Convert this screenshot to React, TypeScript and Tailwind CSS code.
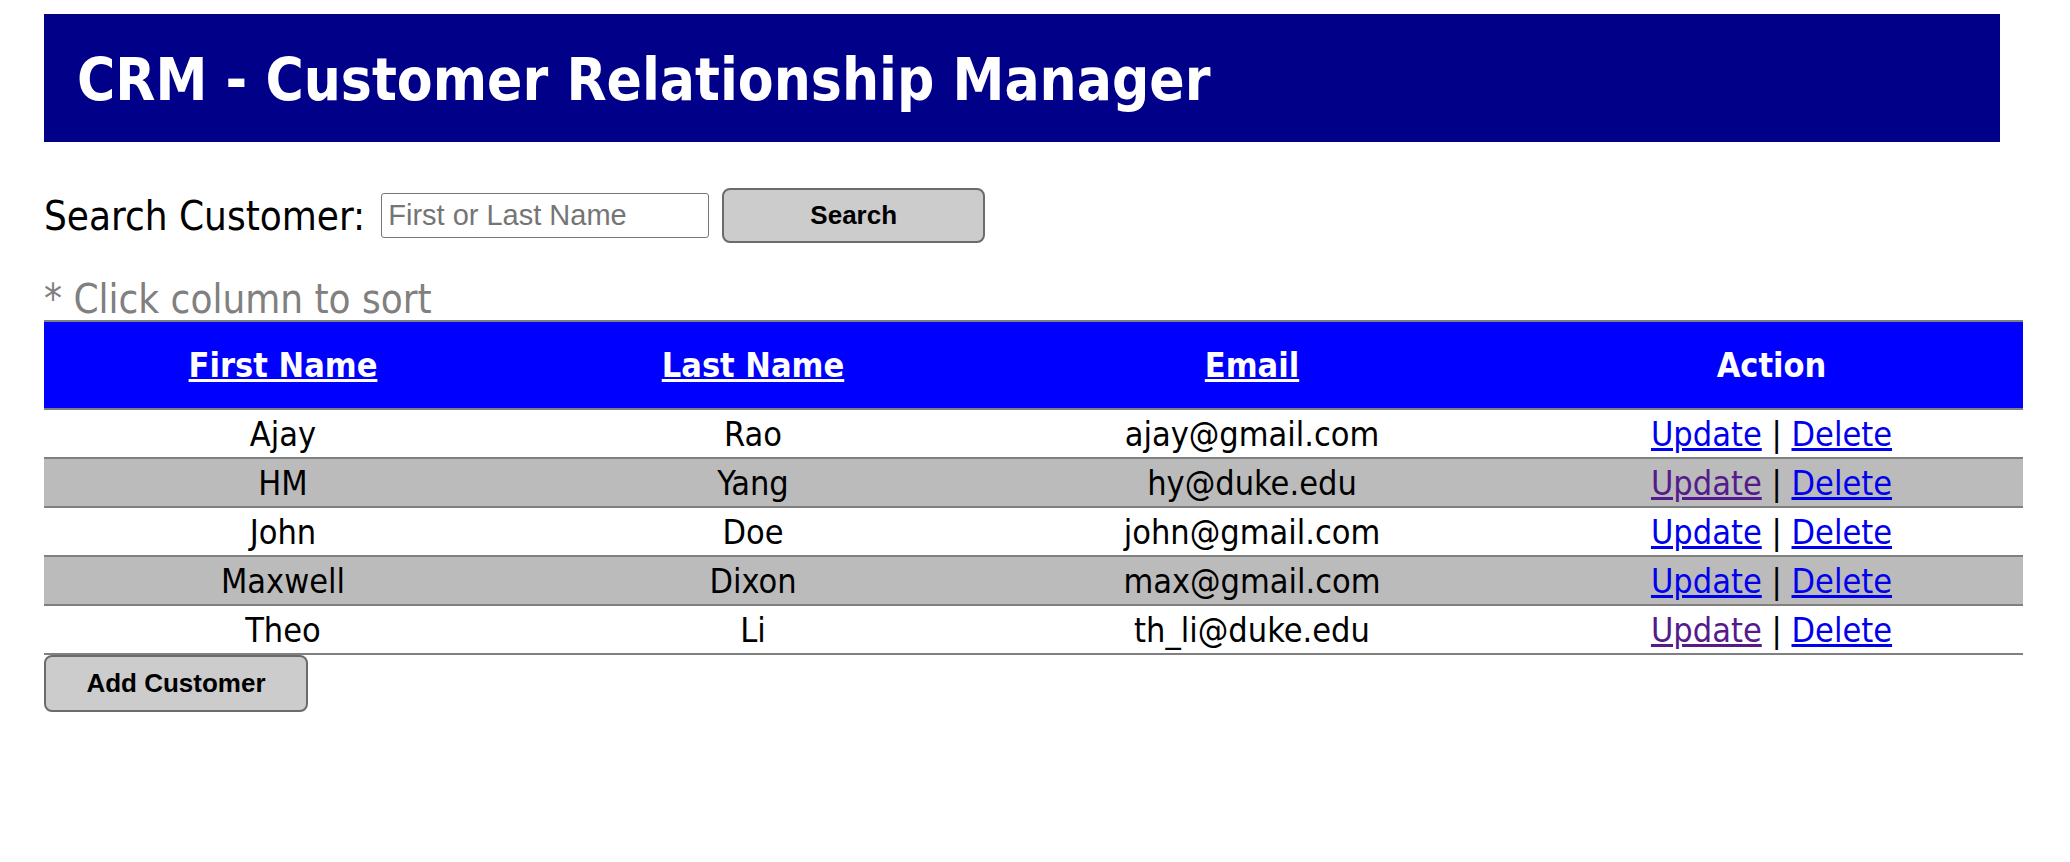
import React from "react";

type Customer = {
  first: string;
  last: string;
  email: string;
  visited: boolean;
};

const customers: Customer[] = [
  { first: "Ajay", last: "Rao", email: "ajay@gmail.com", visited: false },
  { first: "HM", last: "Yang", email: "hy@duke.edu", visited: true },
  { first: "John", last: "Doe", email: "john@gmail.com", visited: false },
  { first: "Maxwell", last: "Dixon", email: "max@gmail.com", visited: false },
  { first: "Theo", last: "Li", email: "th_li@duke.edu", visited: true },
];

export default function App() {
  return (
    <div className="min-h-screen bg-white pl-[44px] pt-[14px] font-['DejaVu_Sans_Condensed','DejaVu_Sans',sans-serif] text-black">
      <div className="flex h-[128px] w-[1956px] items-center bg-[#000088] pl-[33px] pt-[4px]">
        <h1 className="text-[58px] font-bold leading-none text-white">
          CRM - Customer Relationship Manager
        </h1>
      </div>

      <form
        className="mt-[46px] flex h-[55px] items-center"
        onSubmit={(e) => e.preventDefault()}
      >
        <label className="text-[40px] leading-none">Search Customer:</label>
        <input
          type="text"
          placeholder="First or Last Name"
          className="ml-[16px] h-[45px] w-[328px] rounded-[3px] border border-[#767676] px-[6px] font-['Liberation_Sans',Arial,sans-serif] text-[29px] placeholder:text-[#757575]"
        />
        <button
          type="submit"
          className="ml-[13px] h-[55px] w-[263px] rounded-[8px] border-2 border-[#6b6b6b] bg-[#cccccc] font-['Liberation_Sans',Arial,sans-serif] text-[26px] font-bold"
        >
          Search
        </button>
      </form>

      <p className="mt-[35px] text-[40px] leading-[42px] text-[#808080]">
        * Click column to sort
      </p>

      <table className="w-[1979px] border-collapse text-center">
        <colgroup>
          <col className="w-[478px]" />
          <col className="w-[462px]" />
          <col className="w-[536px]" />
          <col className="w-[503px]" />
        </colgroup>
        <thead>
          <tr className="h-[88px] border-y-2 border-[#808080] bg-[#0000ff] text-[34px] font-bold text-white">
            <th>
              <a href="#" className="underline">First Name</a>
            </th>
            <th>
              <a href="#" className="underline">Last Name</a>
            </th>
            <th>
              <a href="#" className="underline">Email</a>
            </th>
            <th>Action</th>
          </tr>
        </thead>
        <tbody className="text-[34px]">
          {customers.map((c, i) => (
            <tr
              key={c.email}
              className={
                i % 2 === 1
                  ? "h-[49px] border-b-2 border-[#808080] bg-[#bbbbbb]"
                  : "h-[49px] border-b-2 border-[#808080] bg-white"
              }
            >
              <td className="leading-none">{c.first}</td>
              <td className="leading-none">{c.last}</td>
              <td className="leading-none">{c.email}</td>
              <td className="leading-none">
                <a
                  href="#"
                  className={c.visited ? "text-[#551a8b] underline" : "text-[#0000ee] underline"}
                >
                  Update
                </a>
                {" | "}
                <a href="#" className="text-[#0000ee] underline">
                  Delete
                </a>
              </td>
            </tr>
          ))}
        </tbody>
      </table>

      <button
        type="button"
        className="h-[57px] w-[264px] rounded-[8px] border-2 border-[#6b6b6b] bg-[#cccccc] font-['Liberation_Sans',Arial,sans-serif] text-[26px] font-bold"
      >
        Add Customer
      </button>
    </div>
  );
}
